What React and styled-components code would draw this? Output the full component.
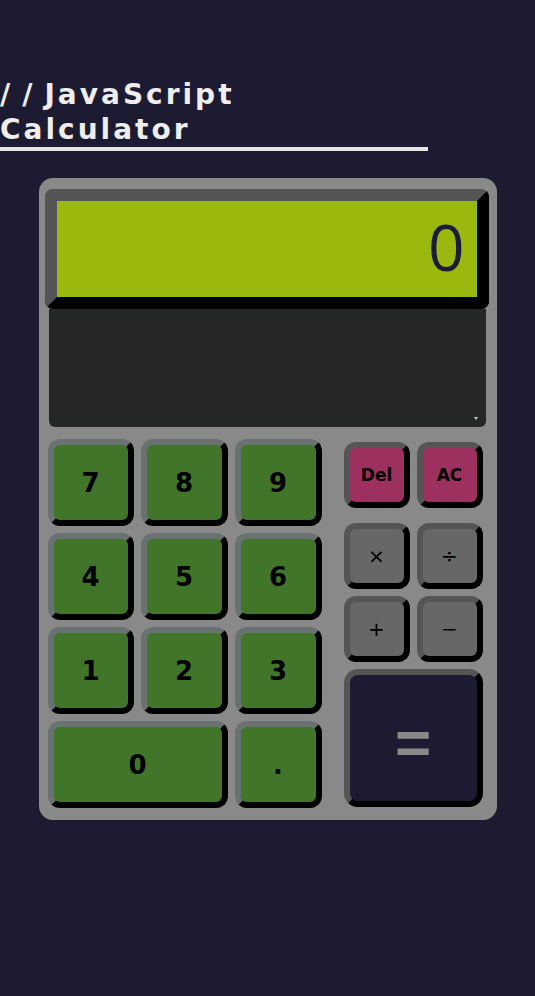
import React from "react";
import styled, { createGlobalStyle } from "styled-components";

const Global = createGlobalStyle`
  html, body { margin: 0; padding: 0; background: #1c1b31; }
  body { font-family: "DejaVu Sans", Verdana, sans-serif; }
`;

const Page = styled.div`
  min-height: 996px;
  background: #1c1b31;
  padding-top: 77px;
  box-sizing: border-box;
`;

const Title = styled.h1`
  margin: 0;
  width: 80%;
  font-family: "DejaVu Sans", Verdana, sans-serif;
  font-weight: bold;
  font-size: 28px;
  line-height: 35px;
  letter-spacing: 3px;
  color: #eeeeee;
  border-bottom: 4px solid #e6e6e6;
`;

const Slashes = styled.span`
  letter-spacing: 12px;
`;

const Word = styled.span``;

const Calc = styled.div`
  width: 458px;
  margin: 27px auto 0;
  background: #898989;
  border-radius: 14px;
  padding: 11px 0 12px;
  box-sizing: border-box;
`;

const Display = styled.div`
  height: 120px;
  margin: 0 8px 0 6px;
  box-sizing: border-box;
  border: 12px solid;
  border-color: #555555 #000000 #000000 #555555;
  border-radius: 8px;
  background: #9bb80f;
  display: flex;
  align-items: center;
  justify-content: flex-end;
  padding: 0 12px 6px 0;
  font-family: "Open Sans", "DejaVu Sans", sans-serif;
  font-size: 64px;
  color: #1c1b31;
`;

const Tape = styled.div`
  position: relative;
  height: 118px;
  margin: 0 11px 0 10px;
  background: #262827;
  border-radius: 0 0 6px 6px;
`;

const Grip = styled.span`
  position: absolute;
  right: 8px;
  bottom: 7px;
  width: 0;
  height: 0;
  border-left: 2px solid transparent;
  border-right: 2px solid transparent;
  border-top: 3px solid #cfcfcf;
`;

const Keypad = styled.div`
  display: flex;
  gap: 22px;
  margin-top: 12px;
  padding-left: 9px;
`;

const Numbers = styled.div`
  display: grid;
  grid-template-columns: 86px 87px 87px;
  grid-template-rows: repeat(4, 87px);
  gap: 7px;
`;

const Key = styled.button`
  box-sizing: border-box;
  margin: 0;
  padding: 0;
  border: 6px solid;
  border-radius: 12px;
  display: flex;
  align-items: center;
  justify-content: center;
  font-family: "DejaVu Sans", Verdana, sans-serif;
  color: #000;
  cursor: pointer;
`;

const NumKey = styled(Key)`
  grid-column: span ${(p) => p.$span || 1};
  background: #41752a;
  border-color: #6a7171 #000000 #000000 #6a7171;
  font-size: 26px;
  font-weight: bold;
`;

const Ops = styled.div`
  display: flex;
  flex-direction: column;
  gap: 7px;
  padding-top: 3px;
`;

const OpRow = styled.div`
  display: grid;
  grid-template-columns: 66px 66px;
  grid-auto-rows: ${(p) => (p.$tall ? "138px" : "66px")};
  gap: 7px;
  margin-bottom: ${(p) => (p.$spaced ? "8px" : "0")};
`;

const OpKey = styled(Key)`
  background: ${(p) => (p.$tone === "red" ? "#9c305f" : "#676767")};
  border-color: #555555 #000000 #000000 #555555;
  font-size: ${(p) => (p.$tone === "red" ? "17px" : "20px")};
  font-weight: ${(p) => (p.$tone === "red" ? "bold" : "normal")};
`;

const EqualsKey = styled(Key)`
  grid-column: span 2;
  background: #1c1b31;
  border-color: #555555 #000000 #000000 #555555;
  border-radius: 14px;
  padding-top: 8px;
  color: #898989;
  font-family: "Liberation Sans", Arial, sans-serif;
  font-size: 62px;
  font-weight: bold;
`;

export default function App() {
  return (
    <>
      <Global />
      <Page>
        <Title>
          <Slashes>//</Slashes>
          <Word>JavaScript</Word> <Word>Calculator</Word>
        </Title>
        <Calc>
          <Display>0</Display>
          <Tape>
            <Grip />
          </Tape>
          <Keypad>
            <Numbers>
              {["7", "8", "9", "4", "5", "6", "1", "2", "3"].map((n) => (
                <NumKey key={n}>{n}</NumKey>
              ))}
              <NumKey $span={2}>0</NumKey>
              <NumKey>.</NumKey>
            </Numbers>
            <Ops>
              <OpRow $spaced>
                <OpKey $tone="red">Del</OpKey>
                <OpKey $tone="red">AC</OpKey>
              </OpRow>
              <OpRow>
                <OpKey>×</OpKey>
                <OpKey>÷</OpKey>
              </OpRow>
              <OpRow>
                <OpKey>+</OpKey>
                <OpKey>−</OpKey>
              </OpRow>
              <OpRow $tall>
                <EqualsKey>=</EqualsKey>
              </OpRow>
            </Ops>
          </Keypad>
        </Calc>
      </Page>
    </>
  );
}
